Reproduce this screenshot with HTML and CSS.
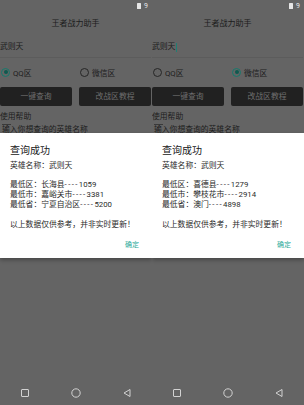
FILE: index.html
```html
<!DOCTYPE html>
<html lang="zh">
<head>
    <meta charset="UTF-8">
    <meta name="viewport" content="width=device-width, initial-scale=1.0">
    <title>王者战力助手</title>
    <link rel="stylesheet" href="styles.css">
</head>
<body>
    <div class="screen">
        <div class="app">
            <div class="status"><span class="battery"></span><span class="clock">9</span></div>
            <div class="title">王者战力助手</div>
            <div class="field">武则天</div>
            <div class="radios">
                <label class="radio checked"><span class="dot"></span>QQ区</label>
                <label class="radio"><span class="dot"></span>微信区</label>
            </div>
            <div class="buttons">
                <div class="btn">一键查询</div>
                <div class="btn">改战区教程</div>
            </div>
            <div class="help">使用帮助</div>
            <div class="help-rule"></div>
            <div class="hint">输入你想查询的英雄名称</div>
        </div>
        <div class="dialog">
            <div class="dlg-title">查询成功</div>
            <div class="hero">英雄名称：武则天</div>
            <div class="rows">
                <div>最低区：长海县<span class="dash">----</span>1059</div>
                <div>最低市：嘉峪关市<span class="dash">----</span>3381</div>
                <div>最低省：宁夏自治区<span class="dash">----</span>5200</div>
            </div>
            <div class="note">以上数据仅供参考，并非实时更新！</div>
            <div class="ok">确定</div>
        </div>
        <div class="navbar">
            <svg viewBox="0 0 10 10"><rect x="1.5" y="1.5" width="7" height="7" rx="0.5"/></svg>
            <svg viewBox="0 0 10 10"><circle cx="5" cy="5" r="4.2"/></svg>
            <svg viewBox="0 0 10 10"><path d="M8 1.5 L2 5 L8 8.5 Z"/></svg>
        </div>
    </div>

    <div class="screen">
        <div class="app">
            <div class="status"><span class="battery"></span><span class="clock">9</span></div>
            <div class="title">王者战力助手</div>
            <div class="field">武则天<span class="cursor"></span></div>
            <div class="radios">
                <label class="radio"><span class="dot"></span>QQ区</label>
                <label class="radio checked"><span class="dot"></span>微信区</label>
            </div>
            <div class="buttons">
                <div class="btn">一键查询</div>
                <div class="btn">改战区教程</div>
            </div>
            <div class="help">使用帮助</div>
            <div class="help-rule"></div>
            <div class="hint">输入你想查询的英雄名称</div>
        </div>
        <div class="dialog">
            <div class="dlg-title">查询成功</div>
            <div class="hero">英雄名称：武则天</div>
            <div class="rows">
                <div>最低区：喜德县<span class="dash">----</span>1279</div>
                <div>最低市：攀枝花市<span class="dash">----</span>2914</div>
                <div>最低省：澳门<span class="dash">----</span>4898</div>
            </div>
            <div class="note">以上数据仅供参考，并非实时更新！</div>
            <div class="ok">确定</div>
        </div>
        <div class="navbar">
            <svg viewBox="0 0 10 10"><rect x="1.5" y="1.5" width="7" height="7" rx="0.5"/></svg>
            <svg viewBox="0 0 10 10"><circle cx="5" cy="5" r="4.2"/></svg>
            <svg viewBox="0 0 10 10"><path d="M8 1.5 L2 5 L8 8.5 Z"/></svg>
        </div>
    </div>
</body>
</html>
```

FILE: styles.css
```css
* {
    margin: 0;
    padding: 0;
    box-sizing: border-box;
}
html, body {
    width: 304px;
    height: 405px;
    overflow: hidden;
}
body {
    display: flex;
    background-color: #646464;
    font-family: Roboto, "Noto Sans CJK SC", sans-serif;
    font-size: 7.8px;
    color: #1c1c1c;
}

/* one phone screen, left edge cropped */
.screen {
    position: relative;
    width: 152px;
    height: 405px;
    overflow: hidden;
    display: flex;
    flex-direction: column;
}
.app {
    flex-grow: 1;
    width: 167px;
    margin-left: -8px;
    padding: 0 8px;
    display: flex;
    flex-direction: column;
}

.status {
    height: 12px;
    display: flex;
    align-items: center;
    justify-content: flex-end;
    gap: 3px;
    padding-right: 0;
    color: #e6e6e6;
    font-size: 7px;
}
.battery {
    width: 4px;
    height: 6px;
    background-color: #e6e6e6;
    border-radius: 0.5px;
}
.clock {
    width: 7px;
}

.title {
    height: 23px;
    line-height: 24px;
    text-align: center;
    font-size: 8px;
}

.field {
    margin-top: 2px;
    height: 21px;
    line-height: 20px;
    display: flex;
    align-items: center;
    border-bottom: 1px solid #5c5c5c;
}
.cursor {
    width: 1px;
    height: 9px;
    margin-left: 1px;
    background-color: #1f7f73;
}

.radios {
    margin-top: 5px;
    height: 18px;
    display: grid;
    grid-template-columns: 1fr 1fr;
    gap: 7px;
}
.radio {
    display: flex;
    align-items: center;
    gap: 3px;
    padding-left: 1px;
}
.dot {
    width: 9px;
    height: 9px;
    border: 1px solid #262626;
    border-radius: 50%;
    display: flex;
    align-items: center;
    justify-content: center;
}
.radio.checked .dot {
    border-color: #16796c;
}
.radio.checked .dot::after {
    content: "";
    width: 4px;
    height: 4px;
    border-radius: 50%;
    background-color: #0f5a50;
}

.buttons {
    margin-top: 6px;
    display: grid;
    grid-template-columns: 1fr 1fr;
    gap: 7px;
}
.btn {
    height: 19px;
    line-height: 19px;
    text-align: center;
    background-color: #212121;
    color: #6e6e6e;
    border-radius: 2px;
}

.help {
    margin-top: 4px;
    height: 14px;
    line-height: 14px;
}
.help-rule {
    width: 9px;
    height: 1px;
    margin-left: 2px;
    background-color: #3a3a3a;
}
.hint {
    margin-left: 2px;
    line-height: 10px;
}

/* dialog sits over the dimmed screen */
.dialog {
    position: absolute;
    top: 133px;
    left: 0;
    right: 0;
    height: 125px;
    padding: 10px 13px 0 10px;
    background-color: #fff;
    color: #2a2a2a;
    box-shadow: 0 2px 4px rgba(0, 0, 0, 0.3);
}
.dlg-title {
    font-size: 10px;
    line-height: 16px;
    color: #202020;
}
.hero {
    margin-top: 2px;
    line-height: 10px;
}
.rows {
    margin-top: 9px;
    line-height: 10px;
}
.dash {
    letter-spacing: 1.4px;
}
.note {
    margin-top: 10px;
    line-height: 10px;
}
.ok {
    margin-top: 10px;
    line-height: 10px;
    text-align: right;
    color: #2aa898;
    font-size: 7px;
}

.navbar {
    height: 24px;
    display: grid;
    grid-template-columns: 1fr 1fr 1fr;
    align-items: center;
    justify-items: center;
}
.navbar svg {
    width: 10px;
    height: 10px;
    fill: none;
    stroke: #d2d2d2;
    stroke-width: 1;
}
```
